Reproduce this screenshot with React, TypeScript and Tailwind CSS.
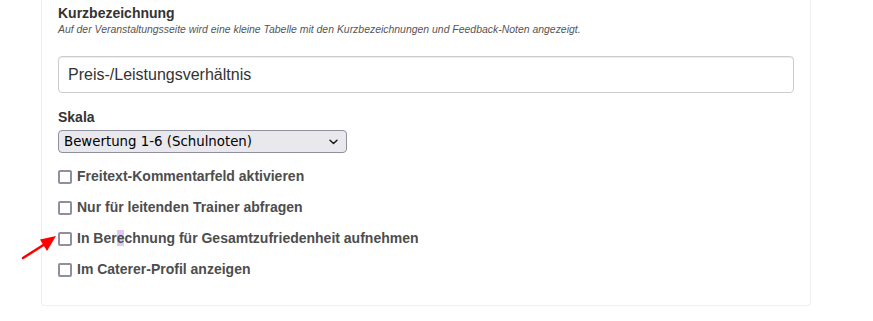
import React from "react";

const labelFont = { fontFamily: '"Liberation Sans", Arial, sans-serif' };

function Check({ children }: { children: React.ReactNode }) {
  return (
    <div className="flex items-start gap-[5px] h-[20px]">
      <span className="mt-[4px] w-[14px] h-[14px] shrink-0 rounded-[2px] border-2 border-[#8f8f9d] bg-white" />
      <span className="text-[14px] leading-[20px] font-bold text-[#4d4d4d]">{children}</span>
    </div>
  );
}

export default function App() {
  return (
    <div className="relative w-[873px] h-[321px] bg-white overflow-hidden" style={labelFont}>
      <div className="ml-[41px] w-[770px] h-[306px] border border-t-0 border-[#efefef] rounded-b-[4px] pl-[16px] pr-[16px] pt-[3px]">
        <div className="text-[14px] leading-[20px] font-bold text-[#333333]">Kurzbezeichnung</div>
        <div className="text-[10.45px] leading-[14px] italic text-[#555555]">
          Auf der Veranstaltungsseite wird eine kleine Tabelle mit den Kurzbezeichnungen und Feedback-Noten angezeigt.
        </div>
        <div className="mt-[19px] w-[736px] h-[37px] border border-[#cccccc] rounded-[4px] flex items-center pl-[9px] text-[16px] text-[#333333] shadow-[inset_0_1px_1px_rgba(0,0,0,0.075)]">
          Preis-/Leistungsverhältnis
        </div>
        <div className="mt-[14px] text-[14px] leading-[20px] font-bold text-[#333333]">Skala</div>
        <div
          className="mt-[3px] w-[289px] h-[23px] border border-[#8f8f9d] rounded-[4px] bg-[#e9e9ed] flex items-center justify-between pl-[5px] pr-[8px] text-[13.33px] text-black"
          style={{ fontFamily: '"DejaVu Sans", sans-serif' }}
        >
          <span>Bewertung 1-6 (Schulnoten)</span>
          <svg width="9" height="6" viewBox="0 0 9 6" className="mt-[1px]">
            <path d="M1 1.2 L4.5 4.5 L8 1.2" fill="none" stroke="#1a1a1a" strokeWidth="1.5" strokeLinecap="round" strokeLinejoin="round" />
          </svg>
        </div>
        <div className="mt-[13px] flex flex-col gap-[11px]">
          <Check>Freitext-Kommentarfeld aktivieren</Check>
          <Check>Nur für leitenden Trainer abfragen</Check>
          <Check>
            In Ber<span className="bg-[#dccbf7]">e</span>chnung für Gesamtzufriedenheit aufnehmen
          </Check>
          <Check>Im Caterer-Profil anzeigen</Check>
        </div>
      </div>
      <svg className="absolute left-0 top-0" width="873" height="321" viewBox="0 0 873 321">
        <line x1="23" y1="258" x2="45" y2="244" stroke="#ff0000" strokeWidth="2.5" strokeLinecap="round" />
        <polygon points="56,236 40,239.5 47,251" fill="#ff0000" />
      </svg>
    </div>
  );
}
